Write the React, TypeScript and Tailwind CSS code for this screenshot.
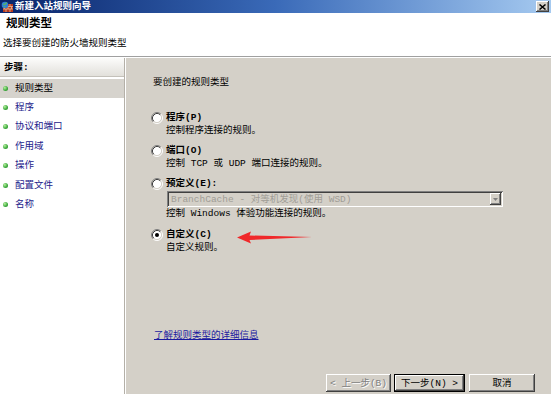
import React from "react";

const steps = ["规则类型", "程序", "协议和端口", "作用域", "操作", "配置文件", "名称"];

function Radio({ checked }: { checked?: boolean }) {
  return (
    <svg width="12" height="12" viewBox="0 0 12 12" className="shrink-0">
      <circle cx="6" cy="6" r="4.5" fill="#fff" />
      <path d="M2.11 9.89 A5.5 5.5 0 0 1 9.89 2.11" fill="none" stroke="#808080" />
      <path d="M9.89 2.11 A5.5 5.5 0 0 1 2.11 9.89" fill="none" stroke="#fff" />
      <path d="M2.82 9.18 A4.5 4.5 0 0 1 9.18 2.82" fill="none" stroke="#404040" />
      <path d="M9.18 2.82 A4.5 4.5 0 0 1 2.82 9.18" fill="none" stroke="#d4d0c8" />
      {checked && <circle cx="6" cy="6" r="2" fill="#000" />}
    </svg>
  );
}

function Option({
  label,
  desc,
  checked,
  children,
  className,
}: {
  label: string;
  desc: string;
  checked?: boolean;
  children?: React.ReactNode;
  className?: string;
}) {
  return (
    <div className={className}>
      <div className="flex items-center gap-[3px] h-[13px]">
        <Radio checked={checked} />
        <span className="font-bold">{label}</span>
      </div>
      {children}
      <div className="pl-[15px] h-[13px]">{desc}</div>
    </div>
  );
}

function FirewallIcon() {
  return (
    <svg width="12" height="12" viewBox="0 0 12 12" className="shrink-0">
      <rect x="2" y="3" width="10" height="8" fill="#b83a1e" />
      <path d="M2 5.5h10M2 8h10M5 3v2.5M9 3v2.5M3.5 5.5V8M7 5.5V8M10.5 5.5V8M5 8v3M9 8v3" stroke="#e8c9a8" strokeWidth="0.7" />
      <circle cx="4" cy="4" r="3.3" fill="#2f7fd8" />
      <path d="M2.2 3.5c1-.8 1.6 0 2.3-.4.6-.4.4-1.4 1.4-1.2M2.6 5.8c.8-.3 1.3.3 1.8-.3" stroke="#5fc24a" strokeWidth="1.1" fill="none" />
    </svg>
  );
}

const raised =
  "shadow-[inset_-1px_-1px_#404040,inset_1px_1px_#ffffff,inset_-2px_-2px_#808080,inset_2px_2px_#d4d0c8]";

export default function App() {
  return (
    <div className="w-[551px] h-[394px] relative overflow-hidden bg-[#d4d0c8] flex flex-col text-[9.5px] leading-[13px] text-black font-['Liberation_Mono','Noto_Sans_CJK_SC',monospace]">
      {/* title bar */}
      <div className="h-[13px] flex items-center bg-linear-to-r from-[#0a246a] via-[#3a6ab8] to-[#a6caf0] pl-[1px]">
        <FirewallIcon />
        <span className="ml-[2px] text-white font-bold">新建入站规则向导</span>
        <div className={`ml-auto mr-[2px] w-[13px] h-[11px] bg-[#d4d0c8] flex items-center justify-center ${raised}`}>
          <svg width="7" height="6" viewBox="0 0 7 6">
            <path d="M0.5 0.5 L6.5 5.5 M6.5 0.5 L0.5 5.5" stroke="#000" strokeWidth="1.5" />
          </svg>
        </div>
      </div>

      {/* header */}
      <div className="h-[44px] bg-white flex flex-col border-b border-[#a0a0a0]">
        <div className="mt-[4px] ml-[6px] h-[14px] leading-[14px] text-[11.5px] font-bold">规则类型</div>
        <div className="mt-[6px] ml-[3px]">选择要创建的防火墙规则类型</div>
      </div>
      <div className="h-[1px] bg-white" />

      {/* body */}
      <div className="flex-1 flex">
        <div className="w-[125px] bg-white flex flex-col border-r border-[#b4b0a8]">
          <div className="h-[19px] flex items-center px-[4px] font-bold bg-linear-to-b from-[#fcfcfb] to-[#e2e0db] border-b border-[#c4c1ba]">
            步骤:
          </div>
          <div className="pt-[1.5px] flex flex-col">
            {steps.map((s, i) => (
              <div
                key={s}
                className={`h-[19.4px] flex items-center ${i === 0 ? "bg-[#d6d3cd] text-black" : "text-[#23238c]"}`}
              >
                <span className="ml-[3px] w-[5px] h-[5px] rounded-full bg-[radial-gradient(circle_at_35%_35%,#b8f0a0,#3aa83a_60%,#2a7a2a)]" />
                <span className="ml-[7px]">{s}</span>
              </div>
            ))}
          </div>
        </div>
        <div className="w-[1px] bg-white" />

        <div className="flex-1 flex flex-col pl-[25px]">
          <div className="mt-[18px] ml-[2px]">要创建的规则类型</div>

          <Option className="mt-[22px]" label="程序(P)" desc="控制程序连接的规则。" />
          <Option className="mt-[7px]" label="端口(O)" desc="控制 TCP 或 UDP 端口连接的规则。" />
          <Option className="mt-[7px]" label="预定义(E):" desc="控制 Windows 体验功能连接的规则。">
            <div className="mt-[1px] ml-[16px] w-[336px] h-[16px] flex items-center bg-[#d4d0c8] shadow-[inset_1px_1px_#808080,inset_-1px_-1px_#ffffff,inset_2px_2px_#404040,inset_-2px_-2px_#d4d0c8]">
              <span className="ml-[4px] text-[#a09d96]">BranchCache - 对等机发现(使用 WSD)</span>
              <div className={`ml-auto mr-[2px] w-[11px] h-[12px] flex items-center justify-center bg-[#d4d0c8] ${raised}`}>
                <svg width="5" height="3" viewBox="0 0 5 3">
                  <path d="M0 0h5L2.5 3z" fill="#808080" />
                </svg>
              </div>
            </div>
          </Option>
          <Option className="mt-[8px]" label="自定义(C)" desc="自定义规则。" checked />

          <a className="mt-[75px] ml-[3px] w-fit text-[#1a1aa0] underline">了解规则类型的详细信息</a>

          <div className="mt-auto mb-[2px] mr-[16px] flex justify-end gap-[3px]">
            <div className={`w-[65px] h-[18px] flex items-center justify-center text-[#808080] [text-shadow:1px_1px_#ffffff] ${raised}`}>
              &lt; 上一步(B)
            </div>
            <div className={`w-[71px] h-[18px] flex items-center justify-center border border-black ${raised}`}>
              下一步(N) &gt;
            </div>
            <div className={`ml-[1px] w-[66px] h-[18px] flex items-center justify-center ${raised}`}>取消</div>
          </div>
        </div>
      </div>

      {/* red annotation arrow */}
      <svg className="absolute left-[230px] top-[225px]" width="90" height="24" viewBox="0 0 90 24">
        <path d="M7 12.5 L21 6.5 L19.5 10.5 L82 12 L19.5 15 L21 18.5 Z" fill="#f0282a" />
      </svg>
    </div>
  );
}
